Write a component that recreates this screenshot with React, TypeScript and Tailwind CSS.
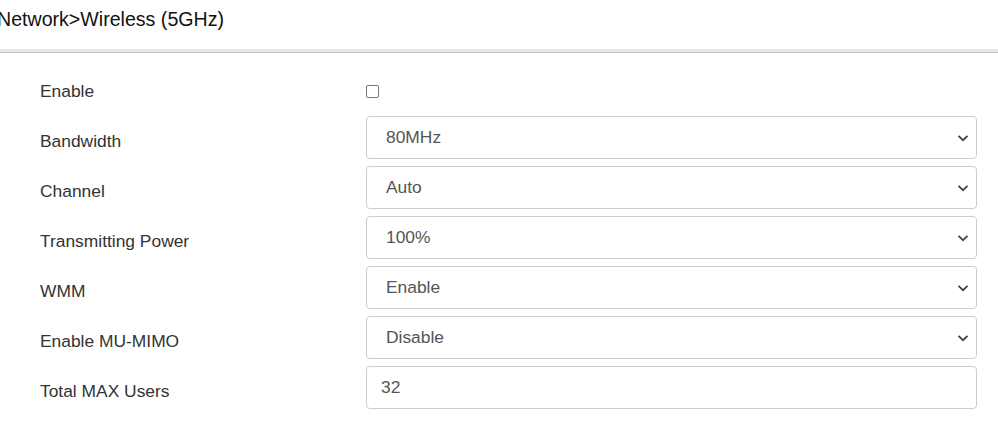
import React from "react";

const Chevron = () => (
  <svg width="12" height="8" viewBox="0 0 12 8" className="absolute right-[7px] top-1/2 -translate-y-1/2">
    <path d="M1.5 1.8 L6 6.2 L10.5 1.8" fill="none" stroke="#444" strokeWidth="1.8" />
  </svg>
);

const Select = ({ value }: { value: string }) => (
  <div className="relative w-[611px] h-[43px] border border-[#cccccc] rounded-[4px] bg-white flex items-center pl-[19px] text-[17.4px] text-[#555555]">
    {value}
    <Chevron />
  </div>
);

const rows: { label: string; kind: "check" | "select" | "input"; value?: string }[] = [
  { label: "Enable", kind: "check" },
  { label: "Bandwidth", kind: "select", value: "80MHz" },
  { label: "Channel", kind: "select", value: "Auto" },
  { label: "Transmitting Power", kind: "select", value: "100%" },
  { label: "WMM", kind: "select", value: "Enable" },
  { label: "Enable MU-MIMO", kind: "select", value: "Disable" },
  { label: "Total MAX Users", kind: "input", value: "32" },
];

export default function App() {
  return (
    <div className="w-[998px] h-[426px] bg-white overflow-hidden" style={{ fontFamily: '"Liberation Sans", Arial, sans-serif' }}>
      <div className="h-[49px] pt-[6px] text-[19.6px] leading-[26px] text-[#111] -ml-[3px]">Network&gt;Wireless (5GHz)</div>
      <div className="h-[4px] bg-[#e6e6e6] border-b border-[#c4c4c4]" />
      <div className="pt-[13px] pl-[40px]">
        {rows.map((r) => (
          <div key={r.label} className="flex h-[50px]">
            <div className="w-[326px] pt-[14px] text-[17.4px] leading-[22px] text-[#333333]">{r.label}</div>
            {r.kind === "check" && (
              <div className="pt-[19px]">
                <div className="w-[13px] h-[13px] border border-[#767676] rounded-[2px] bg-white" />
              </div>
            )}
            {r.kind === "select" && <Select value={r.value!} />}
            {r.kind === "input" && (
              <div className="w-[611px] h-[43px] border border-[#cccccc] rounded-[4px] bg-white flex items-center pl-[14px] text-[17.4px] text-[#555555]">
                {r.value}
              </div>
            )}
          </div>
        ))}
      </div>
    </div>
  );
}
